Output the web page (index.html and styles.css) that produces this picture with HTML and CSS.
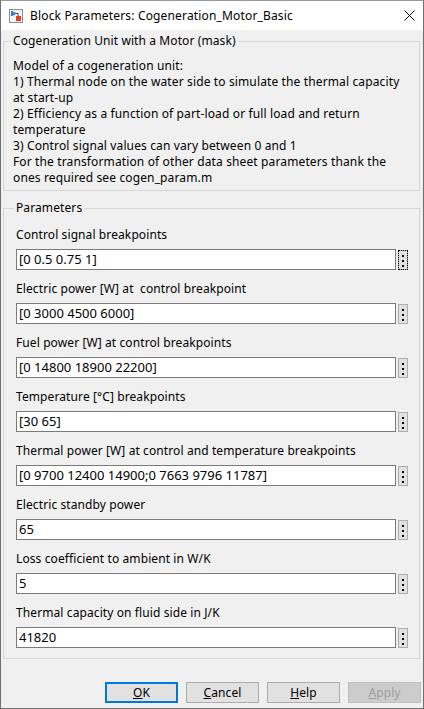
FILE: index.html
```html
<!DOCTYPE html>
<html lang="en">
<head>
<meta charset="utf-8">
<title>Block Parameters: Cogeneration_Motor_Basic</title>
<link rel="stylesheet" href="styles.css">
</head>
<body>
<div class="window">
  <div class="titlebar">
    <svg class="app-icon" viewBox="0 0 14 14" width="14" height="14">
      <rect x="0.5" y="0.5" width="13" height="13" fill="#f4f4f4" stroke="#8c8c8c"/>
      <path d="M2.5 2 V7 M3 2.5 L7 4.5 L3 6.5 Z" fill="#2f7fd8" stroke="#2f7fd8" stroke-width="1"/>
      <path d="M7 4.5 H9 V7" fill="none" stroke="#4a4a4a" stroke-width="1"/>
      <rect x="7" y="7" width="5" height="5" fill="#e0421f"/>
    </svg>
    <span class="title">Block Parameters: Cogeneration_Motor_Basic</span>
    <svg class="close" viewBox="0 0 11 11" width="11" height="11">
      <path d="M0.5 0.5 L10.5 10.5 M10.5 0.5 L0.5 10.5" stroke="#000" stroke-width="1" fill="none"/>
    </svg>
  </div>
  <div class="content">
    <fieldset class="group desc">
      <legend>Cogeneration Unit with a Motor (mask)</legend>
      <p class="desc-text">Model of a cogeneration unit:<br>1) Thermal node on the water side to simulate the thermal capacity<br>at start-up<br>2) Efficiency as a function of part-load or full load and return<br>temperature<br>3) Control signal values can vary between 0 and 1<br>For the transformation of other data sheet parameters thank the<br>ones required see cogen_param.m</p>
    </fieldset>
    <fieldset class="group params">
      <legend>Parameters</legend>
      <div class="param">
        <div class="label">Control signal breakpoints</div>
        <div class="field"><div class="input">[0 0.5 0.75 1]</div><div class="more focus"><span class="dots"></span></div></div>
      </div>
      <div class="param">
        <div class="label">Electric power [W] at&nbsp; control breakpoint</div>
        <div class="field"><div class="input">[0 3000 4500 6000]</div><div class="more"><span class="dots"></span></div></div>
      </div>
      <div class="param">
        <div class="label">Fuel power [W] at control breakpoints</div>
        <div class="field"><div class="input">[0 14800 18900 22200]</div><div class="more"><span class="dots"></span></div></div>
      </div>
      <div class="param">
        <div class="label">Temperature [°C] breakpoints</div>
        <div class="field"><div class="input">[30 65]</div><div class="more"><span class="dots"></span></div></div>
      </div>
      <div class="param">
        <div class="label">Thermal power [W] at control and temperature breakpoints</div>
        <div class="field"><div class="input">[0 9700 12400 14900;0 7663 9796 11787]</div><div class="more"><span class="dots"></span></div></div>
      </div>
      <div class="param">
        <div class="label">Electric standby power</div>
        <div class="field"><div class="input">65</div><div class="more"><span class="dots"></span></div></div>
      </div>
      <div class="param">
        <div class="label">Loss coefficient to ambient in W/K</div>
        <div class="field"><div class="input">5</div><div class="more"><span class="dots"></span></div></div>
      </div>
      <div class="param">
        <div class="label">Thermal capacity on fluid side in J/K</div>
        <div class="field"><div class="input">41820</div><div class="more"><span class="dots"></span></div></div>
      </div>
    </fieldset>
    <div class="actions">
      <div class="btn default"><u>O</u>K</div>
      <div class="btn"><u>C</u>ancel</div>
      <div class="btn"><u>H</u>elp</div>
      <div class="btn disabled"><u>A</u>pply</div>
    </div>
  </div>
</div>
</body>
</html>
```

FILE: styles.css
```css
html, body {
  margin: 0;
  padding: 0;
  background: #ffffff;
}

body {
  font-family: "Noto Sans", "Liberation Sans", sans-serif;
  font-size: 12px;
  letter-spacing: 0.1px;
  color: #000;
}

.window {
  width: 424px;
  height: 709px;
  box-sizing: border-box;
  border: 1px solid #707070;
  border-top-color: #9a9a9a;
  background: #f0f0f0;
  display: flex;
  flex-direction: column;
}

.titlebar {
  height: 29px;
  background: #ffffff;
  display: flex;
  align-items: center;
  padding-left: 8px;
  flex-shrink: 0;
}

.app-icon {
  display: block;
  margin-right: 7px;
  flex-shrink: 0;
}

.title {
  font-size: 12px;
  letter-spacing: 0.16px;
  white-space: nowrap;
  line-height: 16px;
}

.close {
  display: block;
  margin-left: auto;
  margin-right: 8px;
}

.content {
  flex: 1;
  display: flex;
  flex-direction: column;
  padding: 3px 3px 0 2px;
}

.group {
  margin: 0;
  min-width: 0;
  border: 1px solid #d7d7d7;
}

.group legend {
  padding: 0 2px;
  margin-left: -2px;
  line-height: 16px;
  font-size: 12px;
  white-space: nowrap;
}

.desc {
  padding: 9px 11px 4px 9px;
}

.desc-text {
  margin: 0;
  line-height: 16px;
  letter-spacing: 0.13px;
  white-space: nowrap;
}

.params {
  margin-top: 9px;
  padding: 11px 11px 10px 12px;
  display: flex;
  flex-direction: column;
  gap: 11px;
}

.param {
  display: flex;
  flex-direction: column;
  gap: 6px;
}

.label {
  line-height: 16px;
  white-space: nowrap;
}

.field {
  display: flex;
  align-items: center;
  gap: 2px;
}

.input {
  flex: 1;
  height: 21px;
  box-sizing: border-box;
  border: 1px solid #7a7a7a;
  background: #ffffff;
  padding: 0 2px;
  font-size: 13px;
  letter-spacing: 0;
  line-height: 19px;
  white-space: nowrap;
}

.more {
  width: 10px;
  height: 20px;
  box-sizing: border-box;
  border: 1px solid #adadad;
  background: #e1e1e1;
  display: flex;
  justify-content: center;
  padding-top: 4px;
}

.more.focus {
  outline: 1px dotted #000;
  outline-offset: -1px;
}

.dots {
  display: block;
  width: 2px;
  height: 2px;
  background: #000;
  box-shadow: 0 5px 0 #000, 0 10px 0 #000;
}

.actions {
  margin-top: 23px;
  margin-right: -1px;
  display: flex;
  justify-content: flex-end;
  gap: 8px;
}

.btn {
  width: 73px;
  height: 21px;
  box-sizing: border-box;
  border: 1px solid #adadad;
  background: #e1e1e1;
  display: flex;
  align-items: center;
  justify-content: center;
  line-height: 16px;
}

.btn.default {
  border: 2px solid #0078d7;
}

.btn.disabled {
  background: #cccccc;
  border-color: #bfbfbf;
  color: #9d9d9d;
}
```
